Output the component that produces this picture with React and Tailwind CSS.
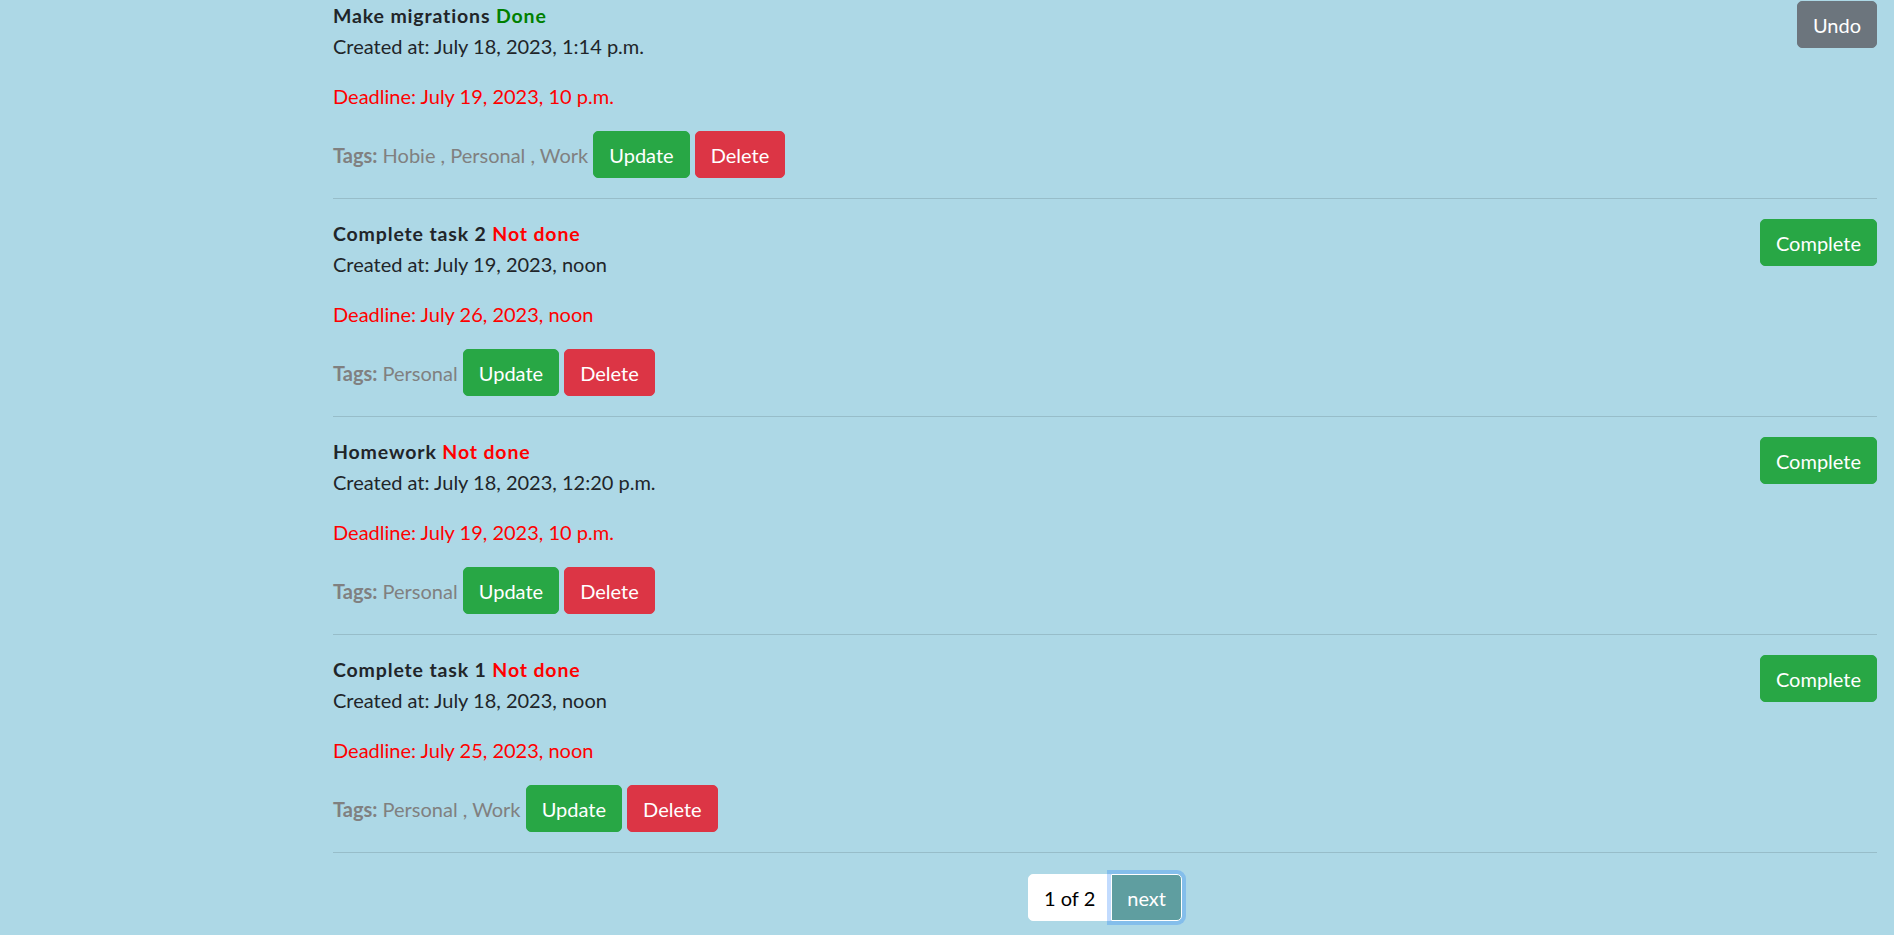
import React from "react";

const tasks = [
  {
    title: "Make migrations",
    done: true,
    created: "July 18, 2023, 1:14 p.m.",
    deadline: "July 19, 2023, 10 p.m.",
    tags: "Hobie , Personal , Work",
  },
  {
    title: "Complete task 2",
    done: false,
    created: "July 19, 2023, noon",
    deadline: "July 26, 2023, noon",
    tags: "Personal",
  },
  {
    title: "Homework",
    done: false,
    created: "July 18, 2023, 12:20 p.m.",
    deadline: "July 19, 2023, 10 p.m.",
    tags: "Personal",
  },
  {
    title: "Complete task 1",
    done: false,
    created: "July 18, 2023, noon",
    deadline: "July 25, 2023, noon",
    tags: "Personal , Work",
  },
];

function TaskItem({ t }) {
  return (
    <li className="flex items-start justify-between border-b border-[#97bdc9] py-5">
      <div>
        <div className="text-[19.5px] font-bold leading-[30px] tracking-[0.85px] text-[#212529]">
          {t.title}{" "}
          {t.done ? (
            <span className="text-[#008000]">Done</span>
          ) : (
            <span className="text-[#ff0000]">Not done</span>
          )}
        </div>
        <p className="mb-5 leading-[30px] text-[#212529]">Created at: {t.created}</p>
        <p className="mb-5 leading-[30px] text-[#ff0000]">Deadline: {t.deadline}</p>
        <p className="leading-[30px] text-[#808080]">
          <span className="font-bold">Tags:</span> {t.tags}{" "}
          <button className="inline-block rounded-[5px] border border-[#28a745] bg-[#28a745] px-[15px] py-[7.5px] leading-[30px] text-white">
            Update
          </button>{" "}
          <button className="inline-block rounded-[5px] border border-[#dc3545] bg-[#dc3545] px-[15px] py-[7.5px] leading-[30px] text-white">
            Delete
          </button>
        </p>
      </div>
      {t.done ? (
        <button className="rounded-[5px] border border-[#6c757d] bg-[#6c757d] px-[15px] py-[7.5px] leading-[30px] text-white">
          Undo
        </button>
      ) : (
        <button className="rounded-[5px] border border-[#28a745] bg-[#28a745] px-[15px] py-[7.5px] leading-[30px] text-white">
          Complete
        </button>
      )}
    </li>
  );
}

export default function App() {
  return (
    <div
      className="min-h-screen overflow-hidden bg-[#add8e6] pl-[333px] pr-[17px] text-[20px] text-[#212529]"
      style={{ fontFamily: "'Segoe UI', Lato, 'Liberation Sans', sans-serif" }}
    >
      <ul className="-mt-[19px]">
        {tasks.map((t, i) => (
          <TaskItem key={i} t={t} />
        ))}
      </ul>
      <div className="mt-[21px] flex justify-center">
        <div className="flex">
          <span className="rounded-l-[5px] border border-white bg-white px-[15px] py-[7.5px] leading-[30px] text-black">
            1 of 2
          </span>
          <button className="relative rounded-r-[5px] border border-white bg-[#5f9ea0] px-[15px] py-[7.5px] leading-[30px] text-white shadow-[0_0_0_4px_rgba(13,110,253,0.25)]">
            next
          </button>
        </div>
      </div>
    </div>
  );
}
